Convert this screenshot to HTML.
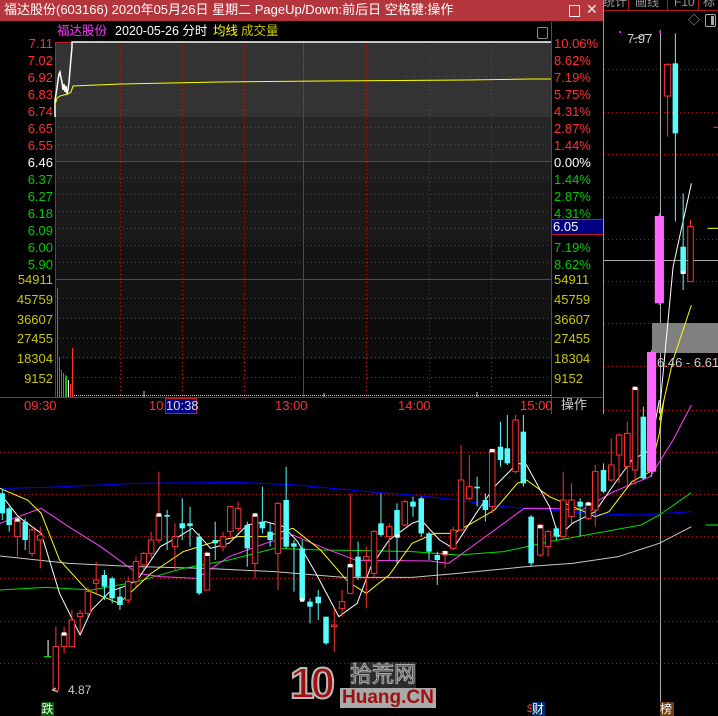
<!DOCTYPE html>
<html><head><meta charset="utf-8"><style>
*{margin:0;padding:0}
body{width:718px;height:716px;background:#000;position:relative;overflow:hidden;font-family:"Liberation Sans","Noto Sans CJK SC",sans-serif}
.t{position:absolute;white-space:nowrap;font-size:12.5px;line-height:14px}
svg{position:absolute;left:0;top:0}
.r{fill:#000;stroke:#ff3232;stroke-width:1;vector-effect:non-scaling-stroke}
.c{fill:#54fcfc;stroke:none}
.rw{stroke:#ff3232;stroke-width:1;vector-effect:non-scaling-stroke}
.cw{stroke:#54fcfc;stroke-width:1;vector-effect:non-scaling-stroke}
.ln{fill:none;stroke-width:1;vector-effect:non-scaling-stroke}
</style></head><body>
<svg width="718" height="716">
<g stroke="#b01818" stroke-dasharray="1,3" stroke-width="1">
<line x1="0" x2="718" y1="69.5" y2="69.5"/><line x1="0" x2="718" y1="112.5" y2="112.5"/><line x1="0" x2="718" y1="154.5" y2="154.5"/><line x1="0" x2="718" y1="197.5" y2="197.5"/><line x1="0" x2="718" y1="239.5" y2="239.5"/><line x1="0" x2="718" y1="281.5" y2="281.5"/><line x1="0" x2="718" y1="323.5" y2="323.5"/><line x1="0" x2="718" y1="366.5" y2="366.5"/><line x1="0" x2="718" y1="410.5" y2="410.5"/><line x1="0" x2="718" y1="452.5" y2="452.5"/><line x1="0" x2="718" y1="494.5" y2="494.5"/><line x1="0" x2="718" y1="536.5" y2="536.5"/><line x1="0" x2="718" y1="578.5" y2="578.5"/><line x1="0" x2="718" y1="621.5" y2="621.5"/><line x1="0" x2="718" y1="663.5" y2="663.5"/>
</g>
<line x1="660.5" x2="660.5" y1="30" y2="716" stroke="#aaa"/>
<line x1="603" x2="718" y1="260.5" y2="260.5" stroke="#aaa"/>
<rect x="652" y="323" width="66" height="30" fill="#808080"/>
<g transform="translate(0,400) scale(0.45788,0.33333)">
<polyline class="ln" stroke="#0000ff" points="0,265 100,262 300,250 520,247 650,255 800,275 900,285 1000,300 1100,320 1200,330 1300,342 1400,345 1510,335"/>
<polyline class="ln" stroke="#c8c8c8" points="0,468 150,490 300,500 450,505 600,515 750,532 900,532 1000,520 1150,500 1250,490 1350,470 1440,430 1510,380"/>
<polyline class="ln" stroke="#00e000" points="0,570 100,562 200,570 300,545 400,505 500,480 600,445 700,450 800,452 900,455 1000,465 1100,455 1200,425 1300,400 1400,375 1440,345 1510,278"/>
<polyline class="ln" stroke="#ff40ff" points="0,370 90,325 150,380 220,440 300,520 350,530 430,535 500,470 580,430 640,405 700,440 780,482 860,482 940,483 980,490 1050,420 1145,325 1200,325 1270,330 1340,275 1420,230 1470,120 1510,15"/>
<polyline class="ln" stroke="#ffff00" points="0,265 60,300 90,340 130,480 190,570 260,610 330,520 400,455 470,425 520,410 580,410 640,385 700,450 760,545 800,580 850,525 900,430 950,400 990,400 1030,370 1080,330 1130,250 1150,240 1200,290 1260,325 1300,350 1330,335 1380,245 1420,215 1440,100 1450,0"/>
<polyline class="ln" stroke="#ffffff" points="0,280 40,350 90,400 130,580 175,705 200,630 240,575 270,560 300,540 350,440 390,410 420,385 460,445 500,430 540,375 580,365 620,380 650,425 690,520 740,650 780,610 810,500 850,420 900,370 920,360 960,420 990,445 1040,340 1080,260 1130,190 1150,195 1200,320 1220,410 1250,370 1300,335 1340,255 1380,180 1420,150 1440,0"/>
<line class="cw" x1="5" x2="5" y1="270" y2="360"/><rect class="c" x="-1" y="280" width="12" height="60"/>
<line class="cw" x1="20" x2="20" y1="320" y2="395"/><rect class="c" x="14" y="325" width="12" height="50"/>
<line class="rw" x1="38" x2="38" y1="350" y2="470"/><rect class="r" x="32" y="360" width="12" height="50"/>
<line class="cw" x1="55" x2="55" y1="355" y2="450"/><rect class="c" x="49" y="365" width="12" height="55"/>
<line class="rw" x1="70" x2="70" y1="380" y2="470"/><rect class="r" x="64" y="390" width="12" height="70"/>
<line class="rw" x1="88" x2="88" y1="380" y2="505"/><rect class="r" x="82" y="405" width="12" height="15"/>
<line stroke="#fff" x1="105" x2="105" y1="720" y2="770" vector-effect="non-scaling-stroke"/><line stroke="#0f0" x1="96" x2="112" y1="770" y2="770" vector-effect="non-scaling-stroke"/>
<line class="rw" x1="122" x2="122" y1="680" y2="870"/><rect class="r" x="116" y="740" width="12" height="130"/>
<line class="rw" x1="140" x2="140" y1="680" y2="760"/><rect class="r" x="134" y="700" width="12" height="40"/>
<line class="rw" x1="157" x2="157" y1="630" y2="740"/><rect class="r" x="151" y="660" width="12" height="80"/>
<line class="rw" x1="175" x2="175" y1="630" y2="700"/><rect class="r" x="169" y="640" width="12" height="10"/>
<line class="rw" x1="192" x2="192" y1="560" y2="650"/><rect class="r" x="186" y="575" width="12" height="65"/>
<line class="rw" x1="210" x2="210" y1="485" y2="580"/><rect class="r" x="204" y="540" width="12" height="10"/>
<line class="cw" x1="228" x2="228" y1="510" y2="600"/><rect class="c" x="222" y="525" width="12" height="35"/>
<line class="cw" x1="245" x2="245" y1="530" y2="610"/><rect class="c" x="239" y="535" width="12" height="60"/>
<line class="cw" x1="262" x2="262" y1="560" y2="630"/><rect class="c" x="256" y="590" width="12" height="25"/>
<line class="rw" x1="280" x2="280" y1="530" y2="610"/><rect class="r" x="274" y="545" width="12" height="55"/>
<line class="rw" x1="297" x2="297" y1="470" y2="560"/><rect class="r" x="291" y="485" width="12" height="60"/>
<line class="rw" x1="314" x2="314" y1="455" y2="510"/><rect class="r" x="308" y="460" width="12" height="35"/>
<line class="rw" x1="330" x2="330" y1="395" y2="475"/><rect class="r" x="324" y="420" width="12" height="40"/>
<line class="rw" x1="347" x2="347" y1="215" y2="430"/><rect class="r" x="341" y="345" width="12" height="75"/>
<line class="cw" x1="365" x2="365" y1="330" y2="450"/><rect class="c" x="359" y="345" width="12" height="5"/>
<line class="rw" x1="382" x2="382" y1="370" y2="510"/><rect class="r" x="376" y="410" width="12" height="30"/>
<line class="cw" x1="398" x2="398" y1="295" y2="420"/><rect class="c" x="392" y="370" width="12" height="15"/>
<line class="cw" x1="415" x2="415" y1="320" y2="440"/><rect class="c" x="409" y="370" width="12" height="8"/>
<line class="cw" x1="435" x2="435" y1="400" y2="585"/><rect class="c" x="429" y="410" width="12" height="170"/>
<line class="rw" x1="452" x2="452" y1="455" y2="570"/><rect class="r" x="446" y="460" width="12" height="110"/>
<line class="cw" x1="470" x2="470" y1="365" y2="480"/><rect class="c" x="464" y="420" width="12" height="10"/>
<line class="rw" x1="487" x2="487" y1="395" y2="455"/><rect class="r" x="481" y="410" width="12" height="30"/>
<line class="rw" x1="503" x2="503" y1="320" y2="410"/><rect class="r" x="497" y="320" width="12" height="75"/>
<line class="rw" x1="520" x2="520" y1="305" y2="395"/><rect class="r" x="514" y="325" width="12" height="60"/>
<line class="cw" x1="540" x2="540" y1="365" y2="500"/><rect class="c" x="534" y="375" width="12" height="70"/>
<line class="rw" x1="557" x2="557" y1="340" y2="535"/><rect class="r" x="551" y="345" width="12" height="145"/>
<line class="cw" x1="573" x2="573" y1="260" y2="400"/><rect class="c" x="567" y="365" width="12" height="20"/>
<line class="cw" x1="590" x2="590" y1="370" y2="440"/><rect class="c" x="584" y="395" width="12" height="25"/>
<line class="rw" x1="607" x2="607" y1="305" y2="570"/><rect class="r" x="601" y="310" width="12" height="150"/>
<line class="cw" x1="625" x2="625" y1="200" y2="445"/><rect class="c" x="619" y="300" width="12" height="140"/>
<line class="cw" x1="642" x2="642" y1="420" y2="575"/><rect class="c" x="636" y="430" width="12" height="10"/>
<line class="cw" x1="660" x2="660" y1="420" y2="605"/><rect class="c" x="654" y="445" width="12" height="155"/>
<line class="cw" x1="677" x2="677" y1="595" y2="670"/><rect class="c" x="671" y="605" width="12" height="15"/>
<line class="cw" x1="695" x2="695" y1="570" y2="660"/><rect class="c" x="689" y="590" width="12" height="20"/>
<line class="cw" x1="712" x2="712" y1="650" y2="735"/><rect class="c" x="706" y="650" width="12" height="80"/>
<line class="rw" x1="730" x2="730" y1="625" y2="755"/><rect class="r" x="724" y="675" width="12" height="5"/>
<line class="rw" x1="747" x2="747" y1="570" y2="650"/><rect class="r" x="741" y="605" width="12" height="20"/>
<line class="rw" x1="765" x2="765" y1="280" y2="580"/><rect class="r" x="759" y="495" width="12" height="85"/>
<line class="cw" x1="782" x2="782" y1="425" y2="540"/><rect class="c" x="776" y="470" width="12" height="60"/>
<line class="rw" x1="800" x2="800" y1="440" y2="625"/><rect class="r" x="794" y="470" width="12" height="10"/>
<line class="rw" x1="817" x2="817" y1="390" y2="530"/><rect class="r" x="811" y="395" width="12" height="125"/>
<line class="cw" x1="832" x2="832" y1="280" y2="410"/><rect class="c" x="826" y="370" width="12" height="35"/>
<line class="rw" x1="850" x2="850" y1="370" y2="480"/><rect class="r" x="844" y="380" width="12" height="30"/>
<line class="cw" x1="867" x2="867" y1="310" y2="490"/><rect class="c" x="861" y="330" width="12" height="80"/>
<line class="rw" x1="884" x2="884" y1="300" y2="380"/><rect class="r" x="878" y="305" width="12" height="70"/>
<line class="cw" x1="902" x2="902" y1="290" y2="350"/><rect class="c" x="896" y="305" width="12" height="15"/>
<line class="cw" x1="920" x2="920" y1="290" y2="410"/><rect class="c" x="914" y="295" width="12" height="105"/>
<line class="cw" x1="937" x2="937" y1="395" y2="480"/><rect class="c" x="931" y="400" width="12" height="55"/>
<line class="cw" x1="955" x2="955" y1="455" y2="555"/><rect class="c" x="949" y="465" width="12" height="15"/>
<line class="rw" x1="972" x2="972" y1="450" y2="505"/><rect class="r" x="966" y="455" width="12" height="10"/>
<line class="rw" x1="990" x2="990" y1="380" y2="450"/><rect class="r" x="984" y="390" width="12" height="55"/>
<line class="rw" x1="1007" x2="1007" y1="135" y2="395"/><rect class="r" x="1001" y="240" width="12" height="150"/>
<line class="rw" x1="1025" x2="1025" y1="165" y2="300"/><rect class="r" x="1019" y="260" width="12" height="35"/>
<line class="cw" x1="1042" x2="1042" y1="230" y2="320"/><rect class="c" x="1036" y="260" width="12" height="5"/>
<line class="cw" x1="1060" x2="1060" y1="280" y2="365"/><rect class="c" x="1054" y="300" width="12" height="30"/>
<line class="rw" x1="1075" x2="1075" y1="145" y2="340"/><rect class="r" x="1069" y="150" width="12" height="170"/>
<line class="cw" x1="1093" x2="1093" y1="65" y2="200"/><rect class="c" x="1087" y="140" width="12" height="40"/>
<line class="cw" x1="1108" x2="1108" y1="45" y2="195"/><rect class="c" x="1102" y="145" width="12" height="45"/>
<line class="rw" x1="1126" x2="1126" y1="45" y2="220"/><rect class="r" x="1120" y="60" width="12" height="155"/>
<line class="cw" x1="1143" x2="1143" y1="45" y2="260"/><rect class="c" x="1137" y="95" width="12" height="155"/>
<line class="cw" x1="1160" x2="1160" y1="345" y2="500"/><rect class="c" x="1154" y="350" width="12" height="140"/>
<line class="rw" x1="1180" x2="1180" y1="370" y2="470"/><rect class="r" x="1174" y="375" width="12" height="90"/>
<line class="rw" x1="1197" x2="1197" y1="390" y2="470"/><rect class="r" x="1191" y="395" width="12" height="45"/>
<line class="cw" x1="1215" x2="1215" y1="380" y2="420"/><rect class="c" x="1209" y="385" width="12" height="25"/>
<line class="rw" x1="1230" x2="1230" y1="215" y2="420"/><rect class="r" x="1224" y="300" width="12" height="110"/>
<line class="rw" x1="1248" x2="1248" y1="250" y2="370"/><rect class="r" x="1242" y="300" width="12" height="50"/>
<line class="cw" x1="1267" x2="1267" y1="295" y2="410"/><rect class="c" x="1261" y="305" width="12" height="15"/>
<line class="rw" x1="1285" x2="1285" y1="305" y2="360"/><rect class="r" x="1279" y="310" width="12" height="45"/>
<line class="rw" x1="1300" x2="1300" y1="195" y2="380"/><rect class="r" x="1294" y="215" width="12" height="115"/>
<line class="cw" x1="1318" x2="1318" y1="190" y2="280"/><rect class="c" x="1312" y="210" width="12" height="65"/>
<line class="rw" x1="1335" x2="1335" y1="115" y2="245"/><rect class="r" x="1329" y="195" width="12" height="45"/>
<line class="rw" x1="1352" x2="1352" y1="100" y2="250"/><rect class="r" x="1346" y="105" width="12" height="60"/>
<line class="rw" x1="1370" x2="1370" y1="65" y2="260"/><rect class="r" x="1364" y="100" width="12" height="100"/>
<line class="rw" x1="1387" x2="1387" y1="-40" y2="255"/><rect class="r" x="1381" y="-36" width="12" height="246"/><rect fill="#fff" x="1382" y="-40" width="10" height="10"/>
<line class="cw" x1="1405" x2="1405" y1="20" y2="240"/><rect class="c" x="1399" y="50" width="12" height="185"/>
<line stroke="#ff66ff" x1="1423" x2="1423" y1="-150" y2="230" vector-effect="non-scaling-stroke"/><rect fill="#ff66ff" x="1413" y="-144" width="20" height="359"/>
<rect fill="#fff" x="33" y="355" width="10" height="10"/><rect fill="#fff" x="135" y="697" width="10" height="10"/><rect fill="#fff" x="342" y="340" width="10" height="10"/><rect fill="#fff" x="448" y="458" width="10" height="10"/><rect fill="#fff" x="552" y="340" width="10" height="10"/><rect fill="#fff" x="655" y="595" width="10" height="10"/><rect fill="#fff" x="760" y="492" width="10" height="10"/><rect fill="#fff" x="863" y="403" width="10" height="10"/><rect fill="#fff" x="967" y="453" width="10" height="10"/><rect fill="#fff" x="1070" y="147" width="10" height="10"/><rect fill="#fff" x="1175" y="375" width="10" height="10"/><rect fill="#fff" x="1280" y="307" width="10" height="10"/>
</g>
<g transform="scale(0.45788,0.33333)">
<polyline class="ln" stroke="#fff" points="1440,1240 1470,800 1510,550"/>
<polyline class="ln" stroke="#ffff00" points="1440,1260 1470,1080 1510,915"/>
<line stroke="#ff66ff" x1="1440" x2="1440" y1="640" y2="915" vector-effect="non-scaling-stroke"/><rect fill="#ff66ff" x="1430" y="648" width="20" height="262"/>
<line class="rw" x1="1458" x2="1458" y1="190" y2="410"/><rect class="r" x="1451" y="193" width="14" height="95"/>
<line class="cw" x1="1475" x2="1475" y1="100" y2="665"/><rect class="c" x="1469" y="190" width="12" height="210"/>
<line class="cw" x1="1492" x2="1492" y1="580" y2="870"/><rect class="c" x="1486" y="740" width="12" height="80"/><rect fill="#fff" x="1487" y="812" width="10" height="10"/>
<line class="rw" x1="1508" x2="1508" y1="660" y2="845"/><rect class="r" x="1502" y="680" width="12" height="165"/>
<line stroke="#ff3232" x1="1558" x2="1568" y1="382" y2="382" vector-effect="non-scaling-stroke"/>
<line stroke="#ffff00" x1="1545" x2="1568" y1="685" y2="685" vector-effect="non-scaling-stroke"/>
</g>
<line x1="706" x2="718" y1="525" y2="525" stroke="#0f0"/>
<path d="M633 39 L640 37 Q645 33 651 35" stroke="#ccc" fill="none"/><rect x="619" y="31" width="2" height="2" fill="#f0f"/><rect x="659" y="31" width="2" height="2" fill="#f0f"/>
<path d="M58 692 L52 690 M52 690 L56 688" stroke="#ccc" fill="none"/>
</svg>

<div style="position:absolute;left:603px;top:0;width:115px;height:10px;border-bottom:1px solid #b01818"></div>
<div class="t" style="left:603px;top:-5px;color:#999;font-size:12px">统计</div>
<div style="position:absolute;left:628px;top:0;width:1px;height:10px;background:#b01818"></div>
<div class="t" style="left:635px;top:-5px;color:#999;font-size:12px">画线</div>
<div style="position:absolute;left:667px;top:0;width:1px;height:10px;background:#b01818"></div>
<div class="t" style="left:674px;top:-5px;color:#999;font-size:12px">F10</div>
<div style="position:absolute;left:698px;top:0;width:1px;height:10px;background:#b01818"></div>
<div class="t" style="left:703px;top:-5px;color:#999;font-size:12px">标</div>
<div class="t" style="left:688px;top:13px;color:#aaa;font-size:12px">◇</div>
<div style="position:absolute;left:705px;top:14px;width:9px;height:11px;border:1px solid #aaa;border-radius:2px"><div style="position:absolute;right:1px;top:1px;width:3px;height:9px;background:#aaa"></div></div>
<div class="t" style="left:627px;top:32px;color:#ccc;font-size:13px">7.97</div>
<div class="t" style="left:657px;top:356px;color:#ccc;font-size:13px">6.46 - 6.61</div>
<div class="t" style="left:68px;top:683px;color:#ccc;font-size:12px">4.87</div>

<div style="position:absolute;left:0;top:0;width:603px;height:414px;background:#000;border-right:1px solid #999;overflow:hidden">
 <div style="position:absolute;left:0;top:0;width:603px;height:21px;background:#b5353d"></div>
 <div class="t" style="left:4px;top:3px;color:#fff;font-size:13px">福达股份(603166) 2020年05月26日 星期二 PageUp/Down:前后日 空格键:操作</div>
 <div style="position:absolute;left:569px;top:5px;width:9px;height:10px;border:1px solid #eee"></div>
 <div class="t" style="left:586px;top:2px;color:#eee;font-size:14px">✕</div>
 <div class="t" style="left:57px;top:24px;color:#ff33ff;font-size:12.5px">福达股份</div>
 <div class="t" style="left:115px;top:24px;color:#fff;font-size:12.5px">2020-05-26 分时</div>
 <div class="t" style="left:213px;top:24px;color:#ffff00;font-size:12.5px">均线</div>
 <div class="t" style="left:241px;top:24px;color:#c8c800;font-size:12.5px">成交量</div>
 <div style="position:absolute;left:537px;top:27px;width:9px;height:10px;border:1px solid #888;border-radius:2px"></div>
 <svg width="603" height="414">
  <rect x="55" y="42" width="496" height="75" fill="#333"/>
  <rect x="55" y="117" width="496" height="44" fill="#262626"/>
  <rect x="55" y="161" width="496" height="22" fill="#1e1e1e"/>
  <rect x="55" y="183" width="496" height="59" fill="#1a1a1a"/>
  <rect x="55" y="242" width="496" height="37" fill="#141414"/>
  <rect x="55" y="279" width="496" height="40" fill="#121212"/>
  <rect x="55" y="319" width="496" height="40" fill="#0d0d0d"/>
  <g stroke="#c01a1a" stroke-dasharray="1,3">
   <line x1="55" x2="551" y1="59.5" y2="59.5"/><line x1="55" x2="551" y1="76.5" y2="76.5"/><line x1="55" x2="551" y1="93.5" y2="93.5"/><line x1="55" x2="551" y1="110.5" y2="110.5"/><line x1="55" x2="551" y1="127.5" y2="127.5"/><line x1="55" x2="551" y1="144.5" y2="144.5"/><line x1="55" x2="551" y1="177.5" y2="177.5"/><line x1="55" x2="551" y1="194.5" y2="194.5"/><line x1="55" x2="551" y1="211.5" y2="211.5"/><line x1="55" x2="551" y1="228.5" y2="228.5"/><line x1="55" x2="551" y1="245.5" y2="245.5"/><line x1="55" x2="551" y1="262.5" y2="262.5"/>
   <line x1="55" x2="551" y1="298.5" y2="298.5"/><line x1="55" x2="551" y1="318.5" y2="318.5"/><line x1="55" x2="551" y1="338.5" y2="338.5"/><line x1="55" x2="551" y1="357.5" y2="357.5"/><line x1="55" x2="551" y1="377.5" y2="377.5"/>
   <line x1="120.5" x2="120.5" y1="42" y2="397"/><line x1="182.5" x2="182.5" y1="42" y2="397"/><line x1="244.5" x2="244.5" y1="42" y2="397"/><line x1="366.5" x2="366.5" y1="42" y2="397"/><line x1="429.5" x2="429.5" y1="42" y2="397"/><line x1="491.5" x2="491.5" y1="42" y2="397"/>
  </g>
  <g stroke="#c01a1a" fill="none">
   <line x1="55" x2="551" y1="161.5" y2="161.5"/><line x1="55" x2="551" y1="279.5" y2="279.5"/>
   <line x1="303.5" x2="303.5" y1="42" y2="397"/>
   <line x1="55.5" x2="55.5" y1="42" y2="397"/><line x1="551.5" x2="551.5" y1="22" y2="414"/>
   <line x1="0" x2="603" y1="397.5" y2="397.5"/>
   <line x1="55" x2="72" y1="42.5" y2="42.5"/>
  </g>
  <g stroke-width="1">
   <line x1="57.5" x2="57.5" y1="288" y2="397" stroke="#ff3232"/>
   <line x1="59.5" x2="59.5" y1="357" y2="397" stroke="#ff3232"/>
   <line x1="61.5" x2="61.5" y1="370" y2="397" stroke="#ff3232"/>
   <line x1="63.5" x2="63.5" y1="373" y2="397" stroke="#0c0"/>
   <line x1="65.5" x2="65.5" y1="375" y2="397" stroke="#ff3232"/>
   <line x1="66.5" x2="66.5" y1="376" y2="397" stroke="#0c0"/>
   <line x1="68.5" x2="68.5" y1="380" y2="397" stroke="#fff"/>
   <line x1="70.5" x2="70.5" y1="384" y2="397" stroke="#ff3232"/>
   <line x1="72.5" x2="72.5" y1="348" y2="397" stroke="#ff3232"/>
  </g>
  <line x1="74" x2="551" y1="395.5" y2="395.5" stroke="#ccc" stroke-dasharray="1,1"/>
  <line x1="144" x2="144" y1="391" y2="397" stroke="#ccc"/><line x1="324" x2="324" y1="393" y2="397" stroke="#ccc"/><line x1="477" x2="477" y1="392" y2="397" stroke="#ccc"/>
  <polyline fill="none" stroke="#ffffff" stroke-width="1.5" points="55,117 55,100 57,88 58,80 59,74 60,72 61,78 62,82 63,90 64,84 65,92 66,86 67,94 68,90 69,82 70,70 71,58 72,47 72,42 551,42"/>
  <polyline fill="none" stroke="#ffff00" stroke-width="1" points="55,105 57,98 60,96 64,95 68,94 71,92 73,86 121,84 220,82 323,81 467,80 529,79 551,79"/>
 </svg>
 <div style="position:absolute;left:0;top:35px;width:53px;text-align:right;font-size:13px;line-height:17px">
  <div style="color:#ff3232">7.11</div><div style="color:#ff3232">7.02</div><div style="color:#ff3232">6.92</div><div style="color:#ff3232">6.83</div><div style="color:#ff3232">6.74</div><div style="color:#ff3232">6.65</div><div style="color:#ff3232">6.55</div><div style="color:#fff">6.46</div><div style="color:#0c0">6.37</div><div style="color:#0c0">6.27</div><div style="color:#0c0">6.18</div><div style="color:#0c0">6.09</div><div style="color:#0c0">6.00</div><div style="color:#0c0">5.90</div>
 </div>
 <div style="position:absolute;left:0;top:270px;width:53px;text-align:right;font-size:13px;line-height:19.8px;color:#c8c800">
  <div>54911</div><div>45759</div><div>36607</div><div>27455</div><div>18304</div><div>9152</div>
 </div>
 <div style="position:absolute;left:554px;top:35px;font-size:13px;line-height:17px">
  <div style="color:#ff3232">10.06%</div><div style="color:#ff3232">8.62%</div><div style="color:#ff3232">7.19%</div><div style="color:#ff3232">5.75%</div><div style="color:#ff3232">4.31%</div><div style="color:#ff3232">2.87%</div><div style="color:#ff3232">1.44%</div><div style="color:#fff">0.00%</div><div style="color:#0c0">1.44%</div><div style="color:#0c0">2.87%</div><div style="color:#0c0">4.31%</div><div style="color:#0c0">5.75%</div><div style="color:#0c0">7.19%</div><div style="color:#0c0">8.62%</div>
 </div>
 <div style="position:absolute;left:552px;top:219px;width:51px;height:16px;background:#000080;border-top:1px solid #c01a1a;border-bottom:1px solid #c01a1a;box-sizing:border-box"></div>
 <div class="t" style="left:553px;top:220px;color:#fff;font-size:13px">6.05</div>
 <div style="position:absolute;left:554px;top:270px;font-size:13px;line-height:19.8px;color:#c8c800">
  <div>54911</div><div>45759</div><div>36607</div><div>27455</div><div>18304</div><div>9152</div>
 </div>
 <div class="t" style="left:24px;top:399px;color:#ff3232;font-size:13px">09:30</div>
 <div class="t" style="left:149px;top:399px;color:#ff3232;font-size:13px">10:</div>
 <div style="position:absolute;left:165px;top:398px;width:32px;height:16px;background:#000080;border:1px solid #c01a1a;box-sizing:border-box"></div>
 <div class="t" style="left:166px;top:399px;color:#ddd;font-size:13px">10:38</div>
 <div class="t" style="left:275px;top:399px;color:#ff3232;font-size:13px">13:00</div>
 <div class="t" style="left:398px;top:399px;color:#ff3232;font-size:13px">14:00</div>
 <div class="t" style="left:520px;top:399px;color:#ff3232;font-size:13px">15:00</div>
 <div class="t" style="left:561px;top:398px;color:#ccc;font-size:13px">操作</div>
</div>

<div class="t" style="left:41px;top:702px;width:13px;height:14px;background:#006000;color:#fff;font-size:12px;text-align:center">跌</div>
<div class="t" style="left:527px;top:702px;color:#ff3232;font-size:11px">$</div>
<div class="t" style="left:532px;top:702px;width:13px;height:14px;background:#00306a;color:#fff;font-size:12px">财</div>
<div class="t" style="left:660px;top:702px;width:14px;height:14px;background:#6a4010;color:#fff;font-size:12px">榜</div>

<div class="t" style="left:290px;top:659px;font-family:'Liberation Sans',sans-serif;font-weight:bold;font-size:44px;line-height:50px;color:#a01010;-webkit-text-stroke:2px #bbb;letter-spacing:-4px">10</div>
<div class="t" style="left:350px;top:662px;font-size:22px;line-height:26px;color:#333;-webkit-text-stroke:1px #aaa;background:rgba(170,170,170,0.25)">拾荒网</div>
<div class="t" style="left:340px;top:688px;font-size:19px;line-height:20px;color:#a01010;font-weight:bold;background:#aaa;padding:0 2px">Huang.CN</div>
</body></html>
